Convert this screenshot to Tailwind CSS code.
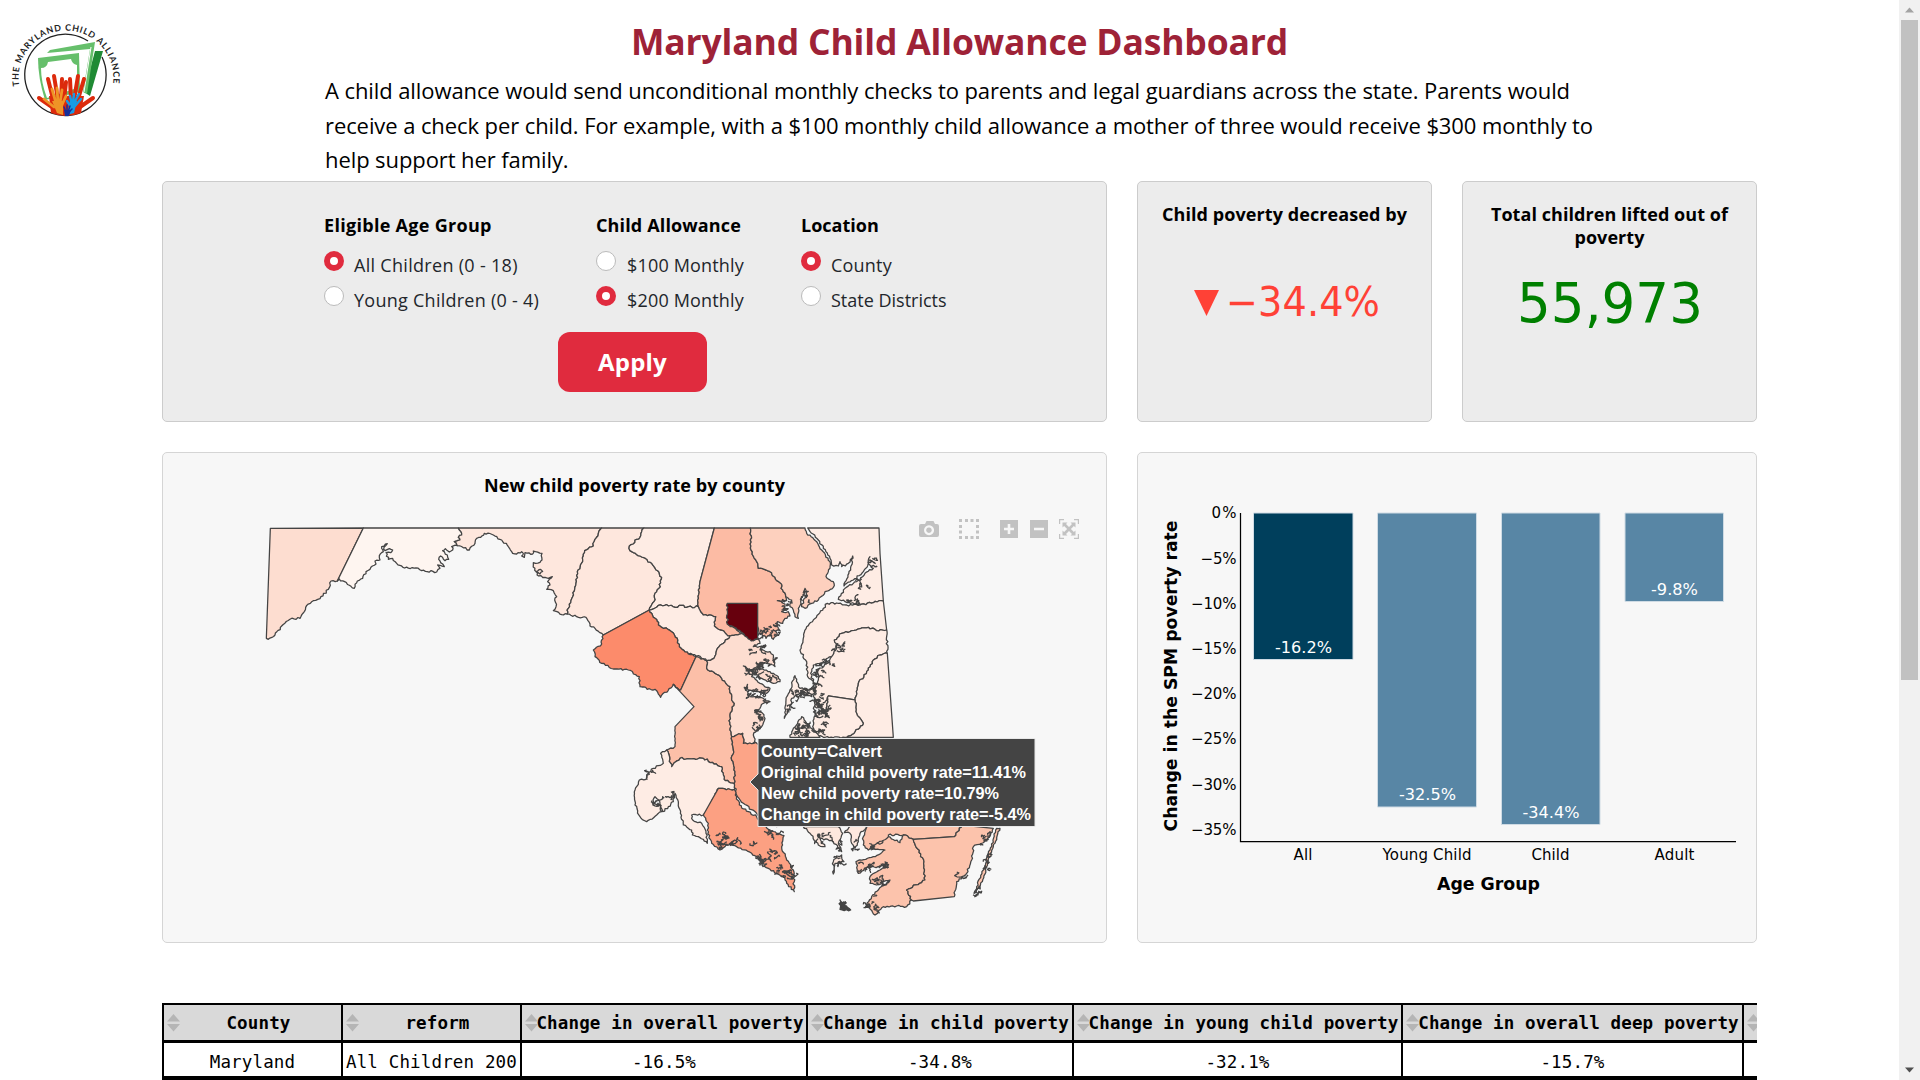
<!DOCTYPE html>
<html lang="en">
<head>
<meta charset="utf-8">
<title>Maryland Child Allowance Dashboard</title>
<script src="https://cdn.jsdelivr.net/npm/@tailwindcss/browser@4"></script>
</head>
<body class="flex h-screen overflow-hidden bg-white font-['Open_Sans',sans-serif] text-black">
<div class="relative h-[1080px] w-[1899px] shrink-0 overflow-hidden">
  <svg class="absolute left-0 top-0" width="140" height="130" viewBox="0 0 140 130">
    <defs><path id="ring" d="M19.3 86 A47.4 47.4 0 1 1 112.700 86"/></defs>
    <text font-family="Lato, sans-serif" font-weight="700" font-size="8.800" fill="#222"><textPath href="#ring" textLength="162">THE MARYLAND CHILD ALLIANCE</textPath></text>
    <path d="M88 41 A40.7 40.7 0 1 0 102 57" fill="none" stroke="#222" stroke-width="1.3"/>
    <path d="M103 51 L90 96 L84 92 L95 51Z" fill="#1f8a34"/>
    <path d="M47 53 L50 50 L95 42 L87 94 L83 92 L90 49Z" fill="#66bf6b"/>
    <path d="M84 92 L91 47" fill="none" stroke="#fff" stroke-width="1"/>
    <path d="M38 58 L79 53 L80 92 L45 100 Q38 78 38 58Z" fill="#66bf6b"/>
    <path d="M48 62 L71 59 Q72 64 77 65 L77 88 L47 98 Q41 82 41 68 Q47 68 48 62Z" fill="#fff"/>
    <g fill="none" stroke="#dc2a0c" stroke-width="4" stroke-linecap="round">
      <path d="M39 98 L52 107 M48 79 L54 103 M54 76 L58 100 M62 79 L61 100 M66 82 L64 100 M93 98 L80 107 M84 79 L77 103 M78 76 L74 100 M70 79 L71 100"/>
    </g>
    <path d="M49 96 H84 L81 113 Q66 119 51 113Z" fill="#dc2a0c"/>
    <g fill="none" stroke="#ef9426" stroke-width="2.8" stroke-linecap="round"><path d="M44 99 L54 107 M52 89 L56 103 M57 88 L58 103 M62 90 L60 103 M66 96 L61 107"/></g>
    <path d="M52 101 H63 V115 L57 113Z" fill="#ef9426"/>
    <g fill="none" stroke="#179be6" stroke-width="2.4" stroke-linecap="round"><path d="M81 99 L75 106 M79 94 L74 103 M74 94 L73 102 M70 96 L72 104 M67 101 L71 107"/></g>
    <path d="M70 101 H77 L74 113 L67 115Z" fill="#179be6"/>
    <g fill="none" stroke="#16309a" stroke-width="1.5" stroke-linecap="round"><path d="M64 107 L66 112 M67 105 V112 M70 106 L68 112 M72 109 L69 112"/></g>
    <path d="M64 110 H71 L69 116 H65Z" fill="#16309a"/>
  </svg>

  <header class="flex h-[181px] flex-col pt-[16px]">
    <h1 class="h-[50px] whitespace-nowrap pl-[631px] text-[35.5px] font-bold leading-[50px] tracking-[-0.17px] text-[#9e2237]">Maryland Child Allowance Dashboard</h1>
    <p class="mt-[7px] whitespace-nowrap pl-[325px] text-[22px] leading-[34.5px] tracking-[-0.09px]">
      A child allowance would send unconditional monthly checks to parents and legal guardians across the state. Parents would<br>
      receive a check per child. For example, with a $100 monthly child allowance a mother of three would receive $300 monthly to<br>
      help support her family.
    </p>
  </header>

  <main class="flex w-[1757px] flex-col gap-[30px] pl-[162px]">
    <section class="flex gap-[30px]">
      <form class="flex h-[241px] w-[945px] flex-col rounded-[5px] border border-[#ccc] bg-[#ececec] pl-[161px] pt-[31px]">
        <div class="grid grid-cols-[272px_205px_1fr] text-[18px] text-[#22262b]">
          <div>
            <div class="mb-[14px] h-6 whitespace-nowrap font-bold leading-6 tracking-[0.3px] text-black">Eligible Age Group</div>
            <label class="flex h-[35px] gap-[10px] whitespace-nowrap leading-[28px] tracking-[0.3px]"><i class="size-5 rounded-full border-[6px] border-[#e02b3e] bg-white"></i><span>All Children (0 - 18)</span></label>
            <label class="flex h-[35px] gap-[10px] whitespace-nowrap leading-[28px] tracking-[0.26px]"><i class="size-5 rounded-full border border-[#bbb] bg-white"></i><span>Young Children (0 - 4)</span></label>
          </div>
          <div>
            <div class="mb-[14px] h-6 whitespace-nowrap font-bold leading-6 tracking-[0.14px] text-black">Child Allowance</div>
            <label class="flex h-[35px] gap-[11px] whitespace-nowrap leading-[28px] tracking-[0.17px]"><i class="size-5 rounded-full border border-[#bbb] bg-white"></i><span>$100 Monthly</span></label>
            <label class="flex h-[35px] gap-[11px] whitespace-nowrap leading-[28px] tracking-[0.17px]"><i class="size-5 rounded-full border-[6px] border-[#e02b3e] bg-white"></i><span>$200 Monthly</span></label>
          </div>
          <div>
            <div class="mb-[14px] h-6 whitespace-nowrap font-bold leading-6 text-black">Location</div>
            <label class="flex h-[35px] gap-[10px] whitespace-nowrap leading-[28px] tracking-[0.2px]"><i class="size-5 rounded-full border-[6px] border-[#e02b3e] bg-white"></i><span>County</span></label>
            <label class="flex h-[35px] gap-[10px] whitespace-nowrap leading-[28px]"><i class="size-5 rounded-full border border-[#bbb] bg-white"></i><span>State Districts</span></label>
          </div>
        </div>
        <button type="button" class="ml-[234px] mt-[11px] flex h-[60px] w-[149px] items-center justify-center rounded-[12px] bg-[#e02b3e] text-[24px] font-bold tracking-[0.2px] text-white">Apply</button>
      </form>
      <div class="flex h-[241px] w-[295px] flex-col items-center rounded-[5px] border border-[#ccc] bg-[#ececec] pt-5 text-[18px] font-bold leading-6 tracking-[0.08px]">
        <span>Child poverty decreased by</span>
        <svg class="mt-4" width="293" height="150" viewBox="1138 242 293 150"><path d="M1194 290h25l-12.500 26z" fill="#ff4136"/><text x="1226" y="316" textLength="154" lengthAdjust="spacingAndGlyphs" font-family="DejaVu Sans, sans-serif" font-weight="400" font-size="40" fill="#ff4136">−34.4%</text></svg>
      </div>
      <div class="flex h-[241px] w-[295px] flex-col items-center rounded-[5px] border border-[#ccc] bg-[#ececec] pt-5 text-center text-[18px] font-bold leading-6 tracking-[0.07px]">
        <span>Total children lifted out of</span>
        <span class="-mt-px">poverty</span>
        <svg class="mt-px" width="293" height="142" viewBox="1463 250 293 142"><text x="1517" y="322" textLength="186" lengthAdjust="spacingAndGlyphs" font-family="DejaVu Sans, sans-serif" font-weight="400" font-size="56" fill="#008000">55,973</text></svg>
      </div>
    </section>

    <section class="flex gap-[30px]">
      <div class="flex h-[491px] w-[945px] flex-col rounded-[5px] border border-[#d5d5d5] bg-[#f7f7f7]">
        <h2 class="h-[52px] pt-5 text-center text-[18px] font-bold leading-6 tracking-[0.08px]">New child poverty rate by county</h2>
        <svg class="block" width="943" height="437" viewBox="163 505 943 437">
          <g id="map" transform="translate(540 500) scale(.33333)" stroke="#444" stroke-width="3.8" stroke-linejoin="round"></g>
          <g fill="#c2c2c2">
            <path fill-rule="evenodd" d="M921 524h4l1.500-3h7l1.500 3h2q2 0 2 2v9q0 2-2 2h-16q-2 0-2-2v-9q0-2 2-2zM929 525.200a5 5 0 1 0 .1 0zM929 527.400a2.800 2.800 0 1 1-.1 0z"/>
            <path d="M959 519h3v3h-3zM965 519h3v3h-3zM970.500 519h3v3h-3zM976 519h3v3h-3zM959 525h3v3h-3zM959 530.500h3v3h-3zM976 525h3v3h-3zM976 530.500h3v3h-3zM959 536h3v3h-3zM965 536h3v3h-3zM970.500 536h3v3h-3zM976 536h3v3h-3z"/>
            <path fill-rule="evenodd" d="M1000 520h18v18h-18zM1007.700 524v3.700h-3.700v2.600h3.700v3.700h2.600v-3.700h3.700v-2.600h-3.700v-3.700z"/>
            <path fill-rule="evenodd" d="M1030 520h18v18h-18zM1034 527.700v2.600h10v-2.600z"/>
            <path d="M1059 519h5v1.200h-3.800v3.800h-1.200zM1079 519v5h-1.200v-3.800h-3.800v-1.200zM1059 539v-5h1.200v3.800h3.800v1.200zM1079 539h-5v-1.200h3.800v-3.800h1.200zM1062.500 522.500h5l-1.500 1.600 3 3 3-3-1.500-1.600h5v5l-1.600-1.500-3 3 3 3 1.600-1.500v5h-5l1.500-1.600-3-3-3 3 1.500 1.600h-5v-5l1.600 1.500 3-3-3-3-1.600 1.500z"/>
          </g>
          <path d="M750 782l8-8v-35.500h277v88h-277v-36.500z" fill="#444" stroke="#e8e8e8" stroke-width="1"/>
          <g font-family="Liberation Sans, Arial, sans-serif" font-weight="700" font-size="16.250" fill="#fff">
            <text x="761" y="757" textLength="121">County=Calvert</text>
            <text x="761" y="778" textLength="265">Original child poverty rate=11.41%</text>
            <text x="761" y="799" textLength="238">New child poverty rate=10.79%</text>
            <text x="761" y="820" textLength="270">Change in child poverty rate=-5.4%</text>
          </g>
        </svg>
      </div>
      <div class="h-[491px] w-[620px] rounded-[5px] border border-[#d5d5d5] bg-[#f7f7f7]">
        <svg class="block" width="618" height="489" viewBox="1138 453 618 489" font-family="DejaVu Sans, Verdana, sans-serif" font-size="15">
          <path d="M1253.500 513h99.500v146.500h-99.500z" fill="#003f5c" stroke="#cfdbe4" stroke-width="1"/>
          <g fill="#5886a5" stroke="#cfdbe4" stroke-width="1"><path d="M1377.500 513h99v294h-99zM1501.500 513h98.500v311.500h-98.500zM1625 513h98.500v88.500h-98.500z"/></g>
          <path d="M1240.500 513v328.500h495.500" fill="none" stroke="#000" stroke-width="1.250"/>
          <g text-anchor="end">
            <text x="1236.500" y="518" textLength="25">0%</text><text x="1236.500" y="564" textLength="36">−5%</text><text x="1236.500" y="609" textLength="45.500">−10%</text><text x="1236.500" y="654" textLength="45.500">−15%</text><text x="1236.500" y="699" textLength="45.500">−20%</text><text x="1236.500" y="744" textLength="45.500">−25%</text><text x="1236.500" y="790" textLength="45.500">−30%</text><text x="1236.500" y="835" textLength="45.500">−35%</text>
          </g>
          <g text-anchor="middle">
            <g fill="#fff"><text x="1303.500" y="652.500" textLength="57" lengthAdjust="spacingAndGlyphs">-16.2%</text><text x="1427.500" y="800" textLength="57" lengthAdjust="spacingAndGlyphs">-32.5%</text><text x="1551" y="818" textLength="57" lengthAdjust="spacingAndGlyphs">-34.4%</text><text x="1674.500" y="595" textLength="47" lengthAdjust="spacingAndGlyphs">-9.8%</text></g>
            <text x="1303" y="860" textLength="19">All</text><text x="1427" y="860" textLength="89">Young Child</text><text x="1550.500" y="860" textLength="38">Child</text><text x="1674.500" y="860" textLength="40">Adult</text>
            <g font-weight="700" font-size="17"><text x="1488.500" y="889.500" textLength="103" lengthAdjust="spacingAndGlyphs">Age Group</text><text transform="translate(1177 676) rotate(-90)" textLength="311" lengthAdjust="spacingAndGlyphs">Change in the SPM poverty rate</text></g>
          </g>
        </svg>
      </div>
    </section>

    <section class="mt-[30px] overflow-hidden">
      <div class="w-[1800px] border-2 border-black font-['DejaVu_Sans_Mono',monospace] text-[17.500px]">
        <div id="head" class="grid h-[38px] grid-cols-[179px_179px_286px_266px_329px_341px_1fr] border-b-[3px] border-black bg-[#d9d9d9] font-bold leading-[36px]"></div>
        <div id="row" class="grid h-[35px] grid-cols-[179px_179px_286px_266px_329px_341px_1fr] border-b-2 border-black leading-[38px]"></div>
      </div>
    </section>
  </main>
</div>
<aside class="flex w-[21px] flex-col items-center justify-between bg-[#f1f1f1] py-[7px]">
  <svg width="9" height="6"><path d="M0 5.500h9l-4.500-5z" fill="#a3a3a3"/></svg>
  <div class="mb-auto mt-[7px] h-[660px] w-[17px] bg-[#c1c1c1]"></div>
  <svg width="9" height="6"><path d="M0 .5h9l-4.500 5z" fill="#505050"/></svg>
</aside>

<script>
const arrows = '<svg class="absolute left-[3px] top-[9px]" width="13" height="18"><path d="M0 7.500h13l-6.500-7.500zM0 10h13l-6.500 7.500z" fill="#b5b5b5"/></svg>';
const heads = ['County','reform','Change in overall poverty','Change in child poverty','Change in young child poverty','Change in overall deep poverty',''];
document.getElementById('head').innerHTML = heads.map(t => `<div class="relative whitespace-pre border-r-2 border-black pl-[12px] text-center">${arrows}<span class="tracking-[0.150px]">${t}</span></div>`).join('');
document.getElementById('row').innerHTML = ['Maryland','All Children 200','-16.5%','-34.8%','-32.1%','-15.7%',''].map(t => `<div class="whitespace-pre border-r-2 border-black text-center tracking-[0.150px]">${t}</div>`).join('');

// County outlines; short edges are roughened with noise keyed to their end points so shared borders coincide.
const parse = s => s.trim().split(/\s+/).map(p => p.split(',').map(Number));
const rnd = s => { let x = Math.sin(s) * 43758.5453; return x - Math.floor(x); };
function edge(a, b) {
  const len = Math.hypot(b[0]-a[0], b[1]-a[1]);
  if (len > 75 || len < 9) return [b];
  const flip = a[0] > b[0] || (a[0] === b[0] && a[1] > b[1]);
  const [p, q] = flip ? [b, a] : [a, b];
  const n = Math.max(2, Math.round(len / 6)), pts = [];
  for (let i = 1; i < n; i++) {
    const o = (rnd(p[0]*12.9 + p[1]*78.2 + q[0]*3.7 + q[1] + i*17.3) - .5) * 6;
    pts.push([p[0]+(q[0]-p[0])*i/n - (q[1]-p[1])/len*o, p[1]+(q[1]-p[1])*i/n + (q[0]-p[0])/len*o]);
  }
  if (flip) pts.reverse();
  pts.push(b);
  return pts;
}
const counties = [
['#fdddd0','-809,85 -530,84 -608,243 -627,243 -635,268 -660,296 -680,302 -703,322 -720,355 -750,358 -775,378 -795,405 -815,418 -821,415'],
['#fef5f0','-530,84 -245,84 -237,95 -235,105 -245,112 -240,120 -257,125 -248,137 -265,140 -262,150 -272,156 -284,146 -292,152 -278,165 -274,178 -285,182 -298,168 -304,178 -292,192 -287,200 -307,195 -300,205 -310,216 -355,212 -372,204 -406,204 -430,190 -442,175 -455,178 -462,158 -448,158 -442,150 -452,146 -465,152 -468,142 -458,131 -475,140 -470,155 -482,167 -480,180 -495,183 -492,192 -510,208 -522,215 -532,235 -548,243 -557,265 -602,237 -608,243'],
['#fee7dd','-245,84 185,84 175,100 165,118 160,138 134,152 128,185 112,215 108,250 98,290 85,325 81,342 65,344 40,332 48,320 44,300 50,290 40,272 20,268 30,255 23,245 28,238 37,230 25,235 15,232 -4,228 -12,215 2,208 8,214 0,222 -12,215 -20,195 -20,188 0,187 6,180 6,160 -20,153 -22,162 -45,158 -47,172 -55,168 -50,160 -55,155 -70,162 -82,160 -95,140 -115,120 -140,105 -167,100 -178,112 -190,115 -195,130 -212,150 -248,137 -257,125 -240,120 -245,112 -235,105 -237,95'],
['#fee7dd','185,84 312,84 305,95 300,112 285,120 280,132 268,138 270,152 300,168 335,190 365,232 357,265 345,280 342,305 328,330 190,405 165,385 150,378 138,352 110,350 81,342 85,325 98,290 108,250 112,215 128,185 134,152 160,138 165,118 175,100'],
['#feece4','312,84 523,84 480,245 475,270 475,320 440,322 425,316 405,322 380,314 355,316 328,330 342,305 345,280 357,265 365,232 335,190 300,168 270,152 268,138 280,132 285,120 300,112 305,95'],
['#fcbba4','523,84 631,84 633,150 650,185 655,205 690,215 705,232 720,248 730,275 737,290 740,302 712,302 735,312 735,330 725,335 745,335 750,348 735,355 728,370 712,365 715,385 720,392 700,390 712,402 700,418 690,405 678,415 665,400 655,405 653,380 562,372 605,400 570,408 540,390 523,378 527,350 490,345 475,320 475,270 480,245'],
['#feece4','328,330 355,316 380,314 405,322 425,316 440,322 475,320 490,345 527,350 523,378 540,390 570,408 550,430 530,450 522,475 500,482 475,467 445,462 418,440 412,415 395,395 360,378 345,355'],
['#fc8b6b','328,330 345,355 360,378 395,395 412,415 418,440 445,462 468,470 422,570 400,553 362,592 350,572 300,560 298,530 265,510 220,507 185,490 165,470 160,450 185,432 190,405'],
['#fcbfa8','468,470 500,482 500,505 525,520 545,535 570,560 575,600 583,610 570,645 570,690 575,710 580,750 575,780 585,815 583,850 552,838 545,800 490,775 420,775 395,800 380,750 405,740 405,680 462,620 400,553 422,570'],
['#fdddd0','570,408 605,400 640,422 652,415 660,430 640,440 665,438 660,450 690,455 700,465 705,500 680,490 650,490 655,505 690,515 715,530 720,545 700,550 665,535 640,520 610,498 640,515 635,530 660,550 690,565 680,580 650,575 615,565 630,590 650,590 690,605 670,610 660,625 645,632 668,640 675,655 665,680 650,690 640,705 648,730 610,730 608,700 575,710 570,690 570,645 583,610 575,600 570,560 545,535 525,520 500,505 500,482 522,475 530,450 550,430'],
['#67000d','562,310 653,310 653,417 640,422 625,417 612,402 562,372'],
['#feece4','380,750 362,760 370,790 340,805 320,825 318,838 298,840 285,870 285,915 300,950 320,965 350,945 365,935 362,920 340,905 345,890 356,900 368,935 385,920 400,905 405,880 415,905 430,975 455,990 457,1005 475,1010 502,1030 498,1000 485,970 458,960 455,945 490,945 510,920 535,865 583,868 583,850 552,838 545,800 490,775 420,775 395,800'],
['#fca487','575,710 608,700 610,730 660,730 700,860 710,980 650,940 610,910 590,885 583,850 585,815 575,780 580,750'],
['#fca082','490,945 535,865 583,868 590,890 598,915 625,935 650,950 670,975 690,990 710,1000 732,1007 725,1040 740,1080 760,1110 763,1175 740,1150 730,1130 710,1120 685,1105 665,1090 650,1070 635,1060 590,1040 570,1030 540,1050 515,1030 502,990 505,970'],
['#fdd0be','631,84 795,84 800,100 830,125 845,150 870,185 870,205 858,230 880,245 880,262 855,275 835,300 815,310 795,325 785,320 800,285 795,265 790,285 782,305 775,325 775,355 765,350 760,330 750,320 755,300 737,290 730,275 720,248 705,232 690,215 655,205 650,185 633,150'],
['#feece4','803,84 1017,84 1020,160 1030,303 1000,308 960,315 915,305 895,298 915,265 940,250 960,240 975,220 1000,205 985,190 990,170 985,190 970,215 940,240 912,258 932,210 938,168 925,190 905,200 900,185 895,198 875,195 870,175 835,120'],
['#feece4','862,310 895,310 920,315 960,315 1000,308 1030,303 1040,390 1010,392 985,382 930,395 905,400 883,420 890,435 915,445 885,455 875,470 850,485 820,495 812,520 820,545 803,530 800,485 780,450 800,380 820,360 850,325'],
['#feece4','1040,390 1042,460 1020,465 1000,480 985,510 955,550 945,600 865,588 860,630 825,620 820,570 835,540 835,510 860,490 875,470 890,445 883,420 905,400 930,395 985,382 1010,392'],
['#feece4','1042,460 1060,712 920,712 945,695 970,670 950,640 945,600 955,550 985,510 1000,480 1020,465'],
['#feece4','865,588 945,600 950,640 970,670 945,695 920,712 850,712 830,705 818,680 825,640 860,630'],
['#feece4','765,527 780,565 810,570 830,560 815,590 780,580 755,595 750,625 733,655 738,600 750,570'],
['#feece4','785,650 800,670 820,690 840,712 750,712 760,685'],
['#fee8de','790,980 810,1000 835,1035 855,1040 840,1015 880,1025 905,1055 895,1030 908,1000 895,980'],
['#fee8de','913,998 930,1000 935,1030 945,1045 955,1025 960,1000 985,975 935,975'],
['#fcc3ac','985,975 970,1010 970,1035 985,1050 1015,1035 1045,1028 1045,1005 1090,1005 1120,1018 1243,1010 1265,975'],
['#fcc3ac','1045,1010 1080,1028 1090,1005 1120,1018 1152,1085 1155,1140 1100,1170 1115,1200 1100,1220 1070,1218 1030,1220 1005,1245 980,1215 995,1190 1015,1170 1035,1155 1050,1140 1010,1155 990,1150 990,1130 1020,1110 1045,1095 1020,1100 985,1100 955,1120 948,1085 1000,1070 1035,1050 990,1045'],
['#fcc3ac','1120,1018 1243,1010 1265,975 1360,985 1340,1020 1300,1040 1295,1080 1280,1120 1250,1145 1243,1190 1120,1203 1115,1200 1100,1170 1155,1140 1152,1085'],
['#fcc3ac','1380,985 1360,1040 1340,1100 1320,1160 1302,1180 1310,1160 1330,1110 1350,1050 1370,985'],
['#444','900,1200 932,1230 900,1228'],
['#fee8de','890,1068 905,1065 912,1085 885,1090 880,1122 880,1085'],
];
const toPath = (pts) => 'M' + pts.map(p => p[0].toFixed(1)+' '+p[1].toFixed(1)).join('L') + 'Z';
let out = '';
for (const [fill, s] of counties) {
  const v = parse(s); let pts = [v[0]];
  for (let i = 0; i < v.length; i++) pts = pts.concat(edge(v[i], v[(i+1) % v.length]));
  out += `<path d="${toPath(pts)}" fill="${fill}"/>`;
}
// Creeks and inlets along the bay: x, y, spread-x, spread-y, strokes
const creeks = [[735,315,18,25,5],[795,285,14,26,5],[705,390,18,22,6],[672,405,18,12,6],[655,448,25,12,5],[690,480,22,20,5],[665,495,20,14,6],[635,508,22,12,5],[655,525,20,14,5],[700,540,18,14,5],[630,575,20,14,6],[665,585,24,18,8],[655,640,14,20,7],[650,680,12,18,5],
[990,185,10,18,4],[965,245,25,14,4],[945,305,22,8,6],[895,445,20,16,7],[860,495,28,12,6],[840,520,16,20,5],[780,580,30,18,13],[745,630,8,20,3],[838,600,18,28,14],[845,635,26,20,15],[830,565,15,20,6],[785,690,30,22,19],[850,685,22,18,7],
[345,905,14,12,5],[400,890,10,16,3],[335,820,20,14,3],[560,1015,26,18,8],[535,1035,18,16,6],[590,1030,18,10,4],[670,1085,20,20,8],[695,1065,18,20,6],[720,1115,22,20,8],[750,1120,12,25,7],[700,1000,20,8,4],[645,1032,12,6,2],
[840,1020,25,18,6],[890,1040,16,18,4],[950,1035,12,18,3],[895,1085,10,18,4],[975,1095,24,18,7],[1030,1095,24,14,6],[1020,1142,28,18,9],[990,1205,16,22,6],[1010,1230,14,12,4],[1000,1035,18,12,4],[1335,1020,20,24,6],[1345,1080,7,45,5],[1265,1130,14,22,3],[912,1216,8,8,5],[1310,1170,8,12,4]];
let d = '', k = 1;
for (const [x, y, sx, sy, n] of creeks) for (let i = 0; i < n; i++) {
  let px = x + (rnd(k++*7.13)-.5)*sx*1.5, py = y + (rnd(k++*5.31)-.5)*sy*1.5;
  d += `M${px.toFixed(1)} ${py.toFixed(1)}`;
  for (let j = 0; j < 6; j++) { px += (rnd(k++*3.77)-.5)*14; py += (rnd(k++*9.17)-.5)*12; d += `L${px.toFixed(1)} ${py.toFixed(1)}`; }
}
out += `<path d="${d}" fill="none"/>`;
document.getElementById('map').innerHTML = out;
</script>
</body>
</html>
